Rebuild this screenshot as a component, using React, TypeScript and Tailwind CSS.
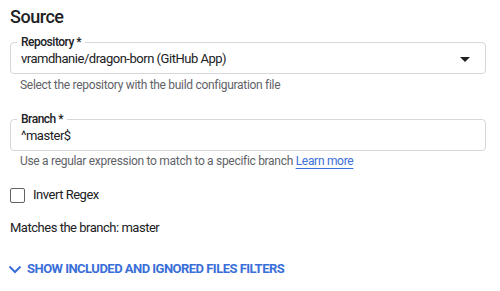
interface OutlinedFieldProps {
  label: string;
  value: string;
  select?: boolean;
}

const OutlinedField = ({ label, value, select }: OutlinedFieldProps) => (
  <fieldset className="h-[39px] rounded-[4px] border border-[#d5d7da] pl-[6px] pr-[14px]">
    <legend className="px-[4px] text-[12px] font-medium leading-[14px] text-[#202124]">{label}</legend>
    <div className="flex h-[20px] items-center justify-between">
      <span className="pl-[4px] text-[13px] leading-[20px] text-[#202124]">{value}</span>
      {select && (
        <svg width="10" height="5" viewBox="0 0 10 5" className="mr-[1px]">
          <path d="M0 0h10L5 5z" fill="#202124" />
        </svg>
      )}
    </div>
  </fieldset>
);

const App = () => {
  return (
    <div className="h-[291px] w-[500px] bg-white px-[10px] pt-[5px] font-['Roboto',sans-serif] tracking-[-0.03em]">
      <h2 className="text-[18px] font-medium leading-[24px] text-[#202124]">Source</h2>

      <div className="mt-[6px] mr-[4px]">
        <OutlinedField label="Repository *" value="vramdhanie/dragon-born (GitHub App)" select />
        <p className="mt-[4px] pl-[10px] text-[12px] leading-[14px] tracking-[-0.3px] text-[#5f6368]">
          Select the repository with the build configuration file
        </p>
      </div>

      <div className="mt-[20px] mr-[4px]">
        <OutlinedField label="Branch *" value="^master$" />
        <p className="mt-[3px] pl-[10px] text-[12px] leading-[14px] tracking-[-0.3px] text-[#5f6368]">
          Use a regular expression to match to a specific branch{' '}
          <a className="text-[#3a6ed8] underline decoration-[#3a6ed8] underline-offset-[3px]">Learn more</a>
        </p>
      </div>

      <label className="mt-[19px] flex items-center gap-[8px]">
        <span className="h-[15px] w-[15px] rounded-[2px] border-[1.5px] border-[#5f6368]" />
        <span className="text-[13px] leading-[16px] text-[#202124]">Invert Regex</span>
      </label>

      <p className="mt-[17px] text-[13px] leading-[16px] text-[#202124]">Matches the branch: master</p>

      <button className="mt-[26px] flex items-center gap-[5px] text-[13px] font-bold leading-[14px] tracking-[-0.04em] text-[#3a6ed8]">
        <svg width="14" height="9" viewBox="0 0 14 9" className="-ml-[2px]">
          <path d="M1.5 1.5 7 7l5.5-5.5" fill="none" stroke="#3a6ed8" strokeWidth="2" />
        </svg>
        SHOW INCLUDED AND IGNORED FILES FILTERS
      </button>
    </div>
  );
};

export default App;
